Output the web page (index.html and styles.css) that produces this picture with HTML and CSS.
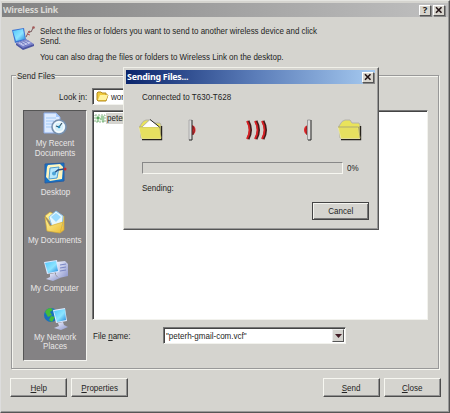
FILE: index.html
```html
<!DOCTYPE html>
<html lang="en">
<head>
<meta charset="utf-8">
<title>Wireless Link</title>
<link rel="stylesheet" href="styles.css">
</head>
<body>
<svg class="defs" width="0" height="0">
  <defs>
    <linearGradient id="screen" x2="1" y2="1"><stop stop-color="#52c6fb"/><stop offset=".55" stop-color="#8ce4ff"/><stop offset="1" stop-color="#2387dc"/></linearGradient>
    <linearGradient id="metal" x2="1" y2="1"><stop stop-color="#f4f6ff"/><stop offset="1" stop-color="#8b95cc"/></linearGradient>
    <linearGradient id="gold" x2="1" y2="1"><stop stop-color="#fff6a0"/><stop offset="1" stop-color="#ecbd36"/></linearGradient>
    <symbol id="close" viewBox="0 0 8 8"><path d="M1 1.2 6.5 6.8M6.5 1.2 1 6.8" stroke="#231517" stroke-width="1.6"/></symbol>
    <symbol id="folder" viewBox="0 0 26 24">
      <path d="M3 20 2 8 5 3.500 8 2h5l2 3h7l1 2v13z" fill="#e9e35b" stroke="#b4b3aa"/>
      <path d="M23.500 8v13.500H4" fill="none" stroke="#26221c" stroke-width="1.400"/>
      <path d="M1 9h20l2 11.500H4z" fill="#e6e060" stroke="#f6f3b0" stroke-width=".6"/>
      <path d="M1 9h20.500l1.500 11" fill="none" stroke="#8f8a50" stroke-width=".7"/>
    </symbol>
  </defs>
</svg>
<main class="window">
  <header class="titlebar"><span class="title">Wireless Link</span><span class="caption-btn help-glyph">?</span><span class="caption-btn"><svg width="8" height="8"><use href="#close"/></svg></span></header>
  <section class="intro">
    <svg class="intro-icon" width="26" height="26" viewBox="0 0 26 26">
      <path d="m2 5 12-2 2 12-11 3z" fill="#3e75d3"/><path d="m3 6 10-2 2 10-9 2z" fill="url(#screen)"/>
      <path d="m6 18 10-4 8 5-11 5z" fill="#7a82cc"/><path d="m8 18 8-3 5 3-8 3z" fill="#c5c9ef"/><path d="m10 18 7-3M12 19l7-3M10 16l6 5M13 15l5 4" stroke="#6873ba" stroke-width=".7"/><path d="m6 18 7 5 11-4v2l-11 4-7-5z" fill="#4c55a2"/>
      <path d="m16 12 3-6 2 1 2-4" fill="none" stroke="#78595d"/><circle cx="23.500" cy="2.500" r="1.300" fill="#a45856"/><path d="m18 6 2 2M17 9l3 1" stroke="#c05d5a"/>
    </svg>
    <div class="intro-text"><p>Select the files or folders you want to send to another wireless device and click<br>Send.</p><p class="t-drag">You can also drag the files or folders to Wireless Link on the desktop.</p></div>
  </section>
  <section class="group">
    <h2 class="legend"><span class="t">Send Files</span></h2>
    <div class="look-row"><label><span class="t">Look <u>i</u>n:</span></label><div class="sunken look-combo">
      <svg width="13" height="11" viewBox="0 0 13 11"><path d="M1 9V2l1-1h3l1 1h4v2h2l-2 6H2z" fill="#f0cb3d" stroke="#b58b20"/><path d="m2 9 2-5h8l-2 5z" fill="#fff3a0"/></svg><span class="t">work</span></div></div>
    <div class="browser">
      <nav class="places">
        <div class="place"><svg width="26" height="25" viewBox="0 0 26 25"><path d="M2 1h12l4 4v16H2z" fill="#dceaff" stroke="#8cadea"/><path d="M14 1v4h4" fill="#a5c9fc"/><path d="M4 6h10M4 9h8M4 12h7M4 15h6" stroke="#a0c8f5"/><circle cx="17" cy="15" r="7" fill="#e1f0f8" stroke="#768fae" stroke-width="1.600"/><circle cx="17" cy="15" r="5" fill="#d5f0fb" stroke="#fff"/><path d="m17 15 3-4M17 15l-3-1" stroke="#345167" stroke-width="1.200"/><circle cx="17" cy="15" r="1.300" fill="#2a8ebd"/></svg><span>My Recent<br>Documents</span></div>
        <div class="place desktop"><svg width="26" height="24" viewBox="0 0 26 24"><path d="m3 3 19-1v18L3 22z" fill="#1274ca" stroke="#2b5da1"/><path d="m6 4 12-1 3 3-1 12-12 2-4-4 1-10z" fill="#fff5bd"/><path d="m8 7 9-1-2 11-8 1z" fill="#b8e8fc" stroke="#4c9dd3"/><path d="m11 13 5-4 6-1" fill="none" stroke="#294e80" stroke-width="1.500"/><circle cx="23" cy="8" r="1.500" fill="#bf2c30"/><circle cx="12" cy="12.500" r="2" fill="#4da5d8"/></svg><span>Desktop</span></div>
        <div class="place documents"><svg width="26" height="26" viewBox="0 0 26 26"><path d="m3 7 5-4 10 5 4-1v14l-4 3z" fill="url(#gold)" stroke="#d2a530" stroke-width=".7"/><path d="m7 8 7-6 7 5-1 10-9 3z" fill="#e7f8ff" stroke="#8cc4ec"/><path d="m9 8 5-4 5 4-5 5z" fill="#9bdcff"/><path d="m3 8 5 9 13-4-3 11-13-2z" fill="url(#gold)" stroke="#d5ae37" stroke-width=".7"/></svg><span>My Documents</span></div>
        <div class="place computer"><svg width="27" height="25" viewBox="0 0 27 25"><path d="m14 4 9-1 3 3v12l-9 2-3-3z" fill="url(#metal)"/><path d="m18 7 6-1M18 10l6-1M18 13l6-1" stroke="#7986c3"/><path d="m2 4 13-2 2 12-12 2z" fill="#d8e7ff"/><path d="m3 5 11-2 2 10-10 2z" fill="url(#screen)"/><path d="m8 16 5-1 1 3 4 2-7 3-7-2 4-2z" fill="url(#metal)"/></svg><span>My Computer</span></div>
        <div class="place network"><svg width="27" height="25" viewBox="0 0 27 25"><circle cx="9" cy="9" r="7" fill="#1871bd"/><path d="M3 6q2-4 6-4l2 2-3 2 2 3-4 2zM9 10l4 1-3 5-3-2z" fill="#45bb38"/><path d="m11 4 12-2 2 13-11 2z" fill="#dceaff"/><path d="m12 5 11-2 1 11-9 2z" fill="url(#screen)"/><path d="m16 17 5-1 1 3 4 2-7 3-7-2 5-2z" fill="url(#metal)"/></svg><span>My Network<br>Places</span></div>
      </nav>
      <div class="sunken file-list"><svg width="12" height="11" viewBox="0 0 12 11"><path d="M1 2h10v7H1z" fill="#e6f4e4" stroke="#94b993" stroke-dasharray="2 1"/><path d="M3 4h2v2H3zM7 4h3M6 6h4M3 8h2M8 8h2" fill="#479d54" stroke="#5ca861"/></svg><span class="selected"><span class="t">peterh-gmail</span></span></div>
    </div>
    <div class="name-row"><label><span class="t">File <u>n</u>ame:</span></label><div class="sunken name-combo"><span class="t">"peterh-gmail-com.vcf"</span><i class="drop"><svg width="7" height="4"><path d="M0 0h7L3.500 4z" fill="#421c25"/></svg></i></div></div>
  </section>
  <footer class="actions"><button><span><u>H</u>elp</span></button><button><span><u>P</u>roperties</span></button><button class="send"><span><u>S</u>end</span></button><button><span><u>C</u>lose</span></button></footer>
</main>
<aside class="dialog">
  <header class="titlebar active"><span class="title">Sending Files...</span><span class="caption-btn"><svg width="8" height="8"><use href="#close"/></svg></span></header>
  <p class="connected"><span class="t">Connected to T630-T628</span></p>
  <div class="transfer">
    <svg width="26" height="24" viewBox="0 0 26 24"><use href="#folder" width="26" height="24"/><path d="m4 9 8-7.500L21.500 9z" fill="#fff"/><path d="M4 9l8-7.500" stroke="#a5a5a0" stroke-width=".8"/><path d="m12 1.500 9.500 7.500" stroke="#252525"/><path d="M1.500 9.500h19.500l2 11H4z" fill="#e6e060"/></svg>
    <svg class="sender" width="9" height="22" viewBox="0 0 9 22"><path d="M4 6q3.500 1 3.500 5T4 16z" fill="#e32629"/><path d="M5 7q2.500 4 0 9" fill="none" stroke="#76282a"/><path d="M1 1h3v20H1z" fill="#ddd"/><path d="M1 21V1h3" fill="none" stroke="#aaa"/><path d="M4 1v20H1" fill="none" stroke="#242424"/></svg>
    <svg class="waves" width="22" height="20" viewBox="0 0 22 20" fill="none"><path d="M2 1q5 9 0 18M10 1q5 9 0 18M17 1q5 9 0 18" stroke="#431b1b" stroke-width="3"/><path d="M1 1q5 9 0 18M9 1q5 9 0 18M16 1q5 9 0 18" stroke="#d82024" stroke-width="1.800"/></svg>
    <svg class="receiver" width="9" height="22" viewBox="0 0 9 22"><path d="M5 6q-4 1-4 5t4 5z" fill="#e32629"/><path d="M4 7q-2 4 0 9" fill="none" stroke="#8f2326"/><path d="M4.500 1h3v20h-3z" fill="#ddd"/><path d="M4.500 21V1h3" fill="none" stroke="#999"/><path d="M8 1v20H5" fill="none" stroke="#242424"/></svg>
    <svg class="target" width="26" height="24"><use href="#folder" width="26" height="24"/></svg>
  </div>
  <div class="progress-row"><div class="progress"></div><span class="t">0%</span></div>
  <p class="sending"><span class="t">Sending:</span></p>
  <button class="cancel"><span>Cancel</span></button>
</aside>
</body>
</html>
```
FILE: styles.css
```css
* { box-sizing: border-box; }
body { margin: 0; width: 450px; height: 413px; overflow: hidden; position: relative; font: 9.5px/10px "Liberation Sans", sans-serif; color: #242424; }
p, h2 { margin: 0; font: inherit; }
span, label { white-space: nowrap; }
svg { display: block; flex: none; }
u { text-decoration-thickness: 1px; text-underline-offset: 1px; }
.t { display: inline-block; transform: scaleX(.845); transform-origin: left; }
.defs { position: absolute; }
.window { width: 450px; height: 413px; padding: 2px; background: #d5d4cf; border: 1px solid; border-color: #e5e5e1 #555 #555 #ddd; box-shadow: inset -1px -1px #999; }
.titlebar { height: 14px; display: flex; align-items: center; gap: 1px; padding: 0 2px 0 1px; background: linear-gradient(90deg, #828282, #c0c0c0); color: #dad9d5; font: bold 9.5px/12px "Noto Sans", sans-serif; }
.window > .titlebar { margin: 0 -1px; padding-right: 3px; }
.title { margin-right: auto; transform: scaleX(.93); transform-origin: left; letter-spacing: -.25px; }
.caption-btn { width: 12px; height: 11px; display: flex; align-items: center; justify-content: center; background: #d8d5ce; border: 1px solid; border-color: #fff #555 #555 #fff; box-shadow: 1px 1px #888; color: #251d1d; }
.help-glyph { margin-right: 1px; }
.intro { display: flex; height: 55px; padding: 9px 0 0 7px; }
.intro-icon { margin-top: -1px; }
.intro-text { margin-left: 4px; white-space: nowrap; transform: scaleX(.838); transform-origin: left; }
.t-drag { margin-top: 6px; }
.group { width: 428px; height: 294px; margin: 3px 0 0 8px; border: 1px solid #999; box-shadow: 1px 1px #f5f5ef, inset 1px 1px #f5f5ef; padding-left: 11px; }
.legend { width: 39px; height: 10px; margin: -5px 0 7px -7px; padding-left: 1px; background: #d5d4cf; white-space: nowrap; }
.look-row { height: 17px; display: flex; align-items: center; margin-bottom: 5px; }
.look-row label { width: 69px; padding-left: 36px; }
.sunken { background: #fff; border: 1px solid; border-color: #777 #f2f2ed #f2f2ed #777; box-shadow: inset 1px 1px #444; }
.look-combo { width: 190px; height: 17px; display: flex; align-items: center; gap: 2px; padding-left: 3px; }
.browser { display: flex; gap: 5px; }
.places { width: 64px; height: 251px; background: #848284; border: 1px solid; border-color: #555 #f4f4f0 #f4f4f0 #555; color: #e9e7e7; text-align: center; padding-top: 1px; }
.place { display: flex; flex-direction: column; align-items: center; height: 48.7px; }
.place span { line-height: 9.5px; transform: scaleX(.845); }
.place:first-child span { margin-top: 1px; }
.place.desktop span { margin-top: 2px; }
.place.documents span { margin-top: 0; }
.place.computer span { margin-top: 0; }
.place.network svg { margin-top: -1px; }
.place.network span { margin-top: 1px; }
.file-list { width: 336px; height: 210px; display: flex; padding: 2px 1px; }
.selected { height: 11px; background: #d5d4cf; padding-left: 1px; }
.name-row { display: flex; align-items: center; height: 17px; margin: -34px 0 0 69px; }
.name-row label { width: 71px; padding-left: 1px; }
.name-combo { width: 183px; height: 17px; display: flex; align-items: center; justify-content: space-between; padding: 1px 1px 1px 2px; }
.drop { width: 12px; height: 13px; background: #d5d4cf; border: 1px solid; border-color: #eee #555 #555 #eee; display: flex; align-items: center; justify-content: center; }
.actions { display: flex; gap: 4px; margin: 9px 0 0 7px; }
button { font: inherit; color: #242424; width: 57px; height: 19px; padding: 0; border: 1px solid; border-color: #f7f7f1 #4d4d4d #4d4d4d #f7f7f1; box-shadow: inset -1px -1px #929292; background: #d5d4cf; border-radius: 0; }
button span { display: inline-block; transform: scaleX(.845); }
.send { margin-left: 191px; }
.dialog { position: absolute; left: 123px; top: 67px; width: 256px; height: 163px; padding: 2px; background: #d5d4cf; border: 1px solid; border-color: #f0f0e9 #555 #555 #f0f0e9; box-shadow: inset -1px -1px #999; }
.active { width: 249px; background: linear-gradient(90deg, #0b256c, #5b7db9 52%, #a6caf0); color: #fff; padding-right: 1px; }
.connected { margin: 8px 0 0 16px; }
.transfer { display: flex; margin: 16px 0 0 12px; height: 24px; }
.sender { margin: 1px 0 0 24px; }
.waves { margin: 2px 0 0 49px; }
.receiver { margin: 1px 0 0 35px; }
.target { margin-left: 25px; }
.progress-row { display: flex; margin: 20px 0 0 16px; height: 12px; align-items: center; gap: 4px; }
.progress { width: 201px; height: 12px; border: 1px solid; border-color: #888 #f7f7f1 #f7f7f1 #888; }
.sending { margin: 9px 0 0 16px; }
.cancel { display: block; margin: 9px 0 0 186px; height: 18px; border-color: #444; box-shadow: inset 1px 1px #f5f5f0, inset -1px -1px #777; }
```
